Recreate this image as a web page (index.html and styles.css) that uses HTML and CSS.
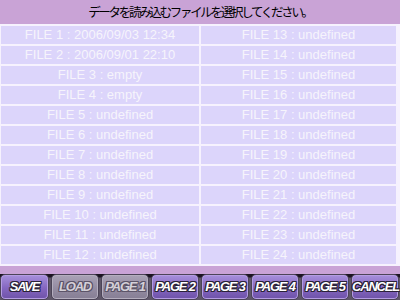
FILE: index.html
```html
<!DOCTYPE html>
<html lang="ja">
<head>
<meta charset="utf-8">
<title>Load</title>
<link rel="stylesheet" href="styles.css">
</head>
<body>
<div class="screen">
  <div class="header">データを読み込むファイルを選択してください。</div>
  <div class="grid">
    <div class="cell">FILE 1 : 2006/09/03 12:34</div>
    <div class="cell">FILE 13 : undefined</div>
    <div class="cell">FILE 2 : 2006/09/01 22:10</div>
    <div class="cell">FILE 14 : undefined</div>
    <div class="cell">FILE 3 : empty</div>
    <div class="cell">FILE 15 : undefined</div>
    <div class="cell">FILE 4 : empty</div>
    <div class="cell">FILE 16 : undefined</div>
    <div class="cell">FILE 5 : undefined</div>
    <div class="cell">FILE 17 : undefined</div>
    <div class="cell">FILE 6 : undefined</div>
    <div class="cell">FILE 18 : undefined</div>
    <div class="cell">FILE 7 : undefined</div>
    <div class="cell">FILE 19 : undefined</div>
    <div class="cell">FILE 8 : undefined</div>
    <div class="cell">FILE 20 : undefined</div>
    <div class="cell">FILE 9 : undefined</div>
    <div class="cell">FILE 21 : undefined</div>
    <div class="cell">FILE 10 : undefined</div>
    <div class="cell">FILE 22 : undefined</div>
    <div class="cell">FILE 11 : undefined</div>
    <div class="cell">FILE 23 : undefined</div>
    <div class="cell">FILE 12 : undefined</div>
    <div class="cell">FILE 24 : undefined</div>
  </div>
  <div class="strip"></div>
  <div class="buttons">
    <div class="btn">SAVE</div>
    <div class="btn off">LOAD</div>
    <div class="btn off">PAGE 1</div>
    <div class="btn">PAGE 2</div>
    <div class="btn">PAGE 3</div>
    <div class="btn">PAGE 4</div>
    <div class="btn">PAGE 5</div>
    <div class="btn">CANCEL</div>
  </div>
</div>
</body>
</html>
```

FILE: styles.css
```css
html, body {
  margin: 0;
  padding: 0;
  background: #f4f0fc;
}
.screen {
  width: 400px;
  height: 300px;
  display: flex;
  flex-direction: column;
  overflow: hidden;
  background: #f6f2fe;
}
.header {
  height: 24px;
  background: #c9a3d6;
  color: #000;
  font-family: "Noto Sans CJK JP", sans-serif;
  font-size: 12.5px;
  letter-spacing: -2.3px;
  line-height: 24px;
  text-align: center;
}
.grid {
  display: grid;
  grid-template-columns: 198px 195px;
  grid-auto-rows: 18px;
  gap: 2px;
  padding: 2px 4px 2px 1px;
}
.cell {
  background: #dcd5fb;
  color: #f6f4fc;
  font-family: "Liberation Sans", Arial, sans-serif;
  font-size: 13px;
  line-height: 18px;
  text-align: center;
  white-space: nowrap;
}
.strip {
  height: 8px;
  background: #c9a3d6;
}
.buttons {
  flex: 1;
  display: flex;
  gap: 2px;
  background: linear-gradient(#1a1420 0, #1a1420 3px, #5e5668 4px, #5e5668 100%);
}
.btn {
  width: 48px;
  box-sizing: border-box;
  border: 1px solid #4c4458;
  border-radius: 5px;
  background: linear-gradient(#a890dc, #8466c0 55%, #6e52a8);
  box-shadow: inset 0 0 0 1px #b49ce2;
  color: #fff;
  font-family: "Liberation Sans", Arial, sans-serif;
  font-weight: bold;
  font-style: italic;
  font-size: 13px;
  letter-spacing: -1.2px;
  line-height: 24px;
  text-align: center;
  white-space: nowrap;
  text-shadow: 1px 0 0 #2a2238, -1px 0 0 #2a2238, 0 1px 0 #2a2238, 0 -1px 0 #2a2238,
               1px 1px 0 #2a2238, -1px -1px 0 #2a2238, 1px -1px 0 #2a2238, -1px 1px 0 #2a2238;
}
.btn:first-child {
  width: 49px;
}
.btn.off {
  background: linear-gradient(#aaa2b6, #948ca2 55%, #867e94);
  box-shadow: inset 0 0 0 1px #b4aebe;
  color: #d4d0d8;
  text-shadow: 1px 0 0 #5c5468, -1px 0 0 #5c5468, 0 1px 0 #5c5468, 0 -1px 0 #5c5468,
               1px 1px 0 #5c5468, -1px -1px 0 #5c5468, 1px -1px 0 #5c5468, -1px 1px 0 #5c5468;
}
```
